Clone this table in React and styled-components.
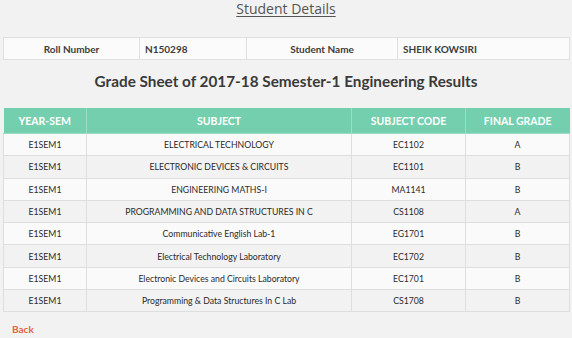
import React from "react";
import styled, { createGlobalStyle } from "styled-components";

const rows = [
  ["E1SEM1", "ELECTRICAL TECHNOLOGY", "EC1102", "A"],
  ["E1SEM1", "ELECTRONIC DEVICES & CIRCUITS", "EC1101", "B"],
  ["E1SEM1", "ENGINEERING MATHS-I", "MA1141", "B"],
  ["E1SEM1", "PROGRAMMING AND DATA STRUCTURES IN C", "CS1108", "A"],
  ["E1SEM1", "Communicative English Lab-1", "EG1701", "B"],
  ["E1SEM1", "Electrical Technology Laboratory", "EC1702", "B"],
  ["E1SEM1", "Electronic Devices and Circuits Laboratory", "EC1701", "B"],
  ["E1SEM1", "Programming & Data Structures In C Lab", "CS1708", "B"],
];

export default function App() {
  return (
    <Page>
      <GlobalStyle />
      <PageTitle>Student Details</PageTitle>
      <InfoTable>
        <colgroup>
          <Col $w={136} />
          <Col $w={107} />
          <Col $w={151} />
          <Col />
        </colgroup>
        <tbody>
          <tr>
            <InfoLabel>Roll Number</InfoLabel>
            <InfoValue>N150298</InfoValue>
            <InfoLabel>Student Name</InfoLabel>
            <InfoValue>SHEIK KOWSIRI</InfoValue>
          </tr>
        </tbody>
      </InfoTable>
      <Heading>Grade Sheet of 2017-18 Semester-1 Engineering Results</Heading>
      <GradeTable>
        <colgroup>
          <Col $w={83} />
          <Col $w={265} />
          <Col $w={114} />
          <Col />
        </colgroup>
        <thead>
          <tr>
            <Th>YEAR-SEM</Th>
            <Th>SUBJECT</Th>
            <Th>SUBJECT CODE</Th>
            <Th>FINAL GRADE</Th>
          </tr>
        </thead>
        <tbody>
          {rows.map((r, i) => (
            <Row key={i} $odd={i % 2 === 1}>
              {r.map((c, j) => (
                <Td key={j}>{c}</Td>
              ))}
            </Row>
          ))}
        </tbody>
      </GradeTable>
      <BackLink href="#">Back</BackLink>
    </Page>
  );
}

const GlobalStyle = createGlobalStyle`
  html, body {
    margin: 0;
    padding: 0;
    background: #f2f2f2;
  }
  body {
    font-family: Lato, "Open Sans", sans-serif;
    color: #444;
  }
`;

const Page = styled.div`
  width: 572px;
  height: 338px;
  padding: 0 3px;
  box-sizing: border-box;
  display: flex;
  flex-direction: column;
  align-items: stretch;
  overflow: hidden;
`;

const PageTitle = styled.h1`
  margin: 0;
  text-align: center;
  font-family: "Open Sans", sans-serif;
  font-weight: 400;
  font-size: 14px;
  line-height: 17px;
  color: #555;
  text-decoration: underline;
  text-underline-offset: 2px;
  text-decoration-thickness: 1px;
`;

const Col = styled.col`
  width: ${(p) => (p.$w ? `${p.$w}px` : "auto")};
`;

const InfoTable = styled.table`
  margin-top: 20px;
  width: 567px;
  border-collapse: collapse;
  background: #fbfbfb;
  table-layout: fixed;
`;

const InfoCell = styled.td`
  height: 21px;
  border: 1px solid #e0e0e0;
  font-size: 10px;
  font-weight: 700;
  color: #3c3c3c;
  padding: 0 5px;
`;

const InfoLabel = styled(InfoCell)`
  text-align: center;
`;

const InfoValue = styled(InfoCell)`
  text-align: left;
`;

const Heading = styled.h2`
  margin: 12px 0 0;
  text-align: center;
  font-family: Lato, sans-serif;
  font-weight: 700;
  font-size: 15.3px;
  line-height: 18px;
  color: #3a3a3a;
`;

const GradeTable = styled.table`
  margin-top: 18px;
  width: 567px;
  border-collapse: collapse;
  table-layout: fixed;
`;

const Th = styled.th`
  height: 25px;
  padding: 0;
  background: #74cfae;
  color: #fff;
  font-size: 10.5px;
  font-weight: 700;
  text-align: center;
  border: 1px solid #9fdcc6;
  border-top: none;
  &:first-child { border-left: none; }
  &:last-child { border-right: none; }
`;

const Row = styled.tr`
  background: ${(p) => (p.$odd ? "#f2f2f2" : "#fafafa")};
`;

const Td = styled.td`
  height: 21.3px;
  padding: 0;
  border: 1px solid #dedede;
  font-size: 8.7px;
  color: #2a2a2a;
  text-align: center;
`;

const BackLink = styled.a`
  margin-top: 11px;
  margin-left: 9px;
  align-self: flex-start;
  font-size: 10px;
  font-weight: 700;
  color: #e5633f;
  text-decoration: none;
`;
